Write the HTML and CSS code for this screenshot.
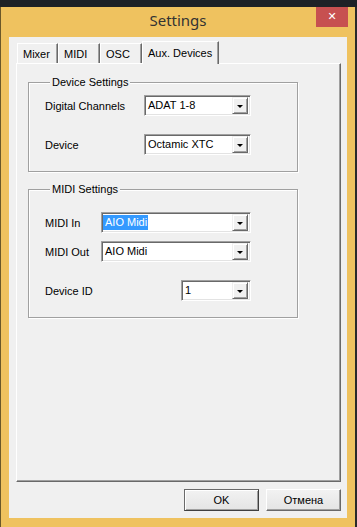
FILE: index.html
```html
<!DOCTYPE html>
<html>
<head>
    <title>Settings</title>
    <link rel="stylesheet" href="styles.css">
</head>
<body>
    <div class="strip"></div>
    <div class="window">
        <div class="titlebar">
            <div class="title">Settings</div>
            <div class="close">&#x2715;</div>
        </div>
        <div class="client">
            <div class="tabs">
                <div class="tab t-mixer">Mixer</div>
                <div class="tab t-midi">MIDI</div>
                <div class="tab t-osc">OSC</div>
                <div class="tab t-aux active">Aux. Devices</div>
            </div>
            <div class="panel">
                <fieldset class="group device">
                    <legend>Device Settings</legend>
                    <div class="row">
                        <span>Digital Channels</span>
                        <div class="combo w107"><span class="val">ADAT 1-8</span><span class="drop"></span></div>
                    </div>
                    <div class="row">
                        <span>Device</span>
                        <div class="combo w107"><span class="val">Octamic XTC</span><span class="drop"></span></div>
                    </div>
                </fieldset>
                <fieldset class="group midi">
                    <legend>MIDI Settings</legend>
                    <div class="row close-next">
                        <span>MIDI In</span>
                        <div class="combo w150"><span class="val sel">AIO Midi</span><span class="drop"></span></div>
                    </div>
                    <div class="row">
                        <span>MIDI Out</span>
                        <div class="combo w150"><span class="val">AIO Midi</span><span class="drop"></span></div>
                    </div>
                    <div class="row">
                        <span>Device ID</span>
                        <div class="combo w70"><span class="val">1</span><span class="drop"></span></div>
                    </div>
                </fieldset>
            </div>
            <div class="buttons">
                <button class="btn default">OK</button>
                <button class="btn">Отмена</button>
            </div>
        </div>
    </div>
</body>
</html>
```

FILE: styles.css
```css
body{
    margin: 0;
    background: #23272d;
    font-family: "Liberation Sans", Arial, sans-serif;
    font-size: 11px;
    color: #000;
}
.strip{
    height: 7px;
    background: #1d2126;
}
.window{
    height: 520px;
    box-sizing: border-box;
    background: #efc25f;
    border-left: 1px solid #6b5829;
    border-right: 2px solid #2a2a2a;
    padding: 0 8px 9px 8px;
}
.titlebar{
    height: 30px;
    display: grid;
    grid-template-columns: 1fr auto 1fr;
    align-items: start;
}
.title{
    grid-column: 2;
    font-family: "Noto Sans", sans-serif;
    font-size: 15px;
    line-height: 27px;
    color: #333;
}
.close{
    grid-column: 3;
    justify-self: end;
    width: 32px;
    height: 20px;
    margin-right: -1px;
    background: #c75050;
    color: #fff;
    font-family: "DejaVu Sans", sans-serif;
    font-size: 11px;
    font-weight: bold;
    text-align: center;
    line-height: 20px;
}
.client{
    height: 481px;
    box-sizing: border-box;
    background: #f0f0f0;
    padding: 4px 6px 0 7px;
}
.tabs{
    display: flex;
    align-items: flex-end;
    height: 22px;
    padding-left: 1px;
}
.tab{
    height: 20px;
    box-sizing: border-box;
    border-top: 1px solid #fff;
    border-left: 1px solid #fff;
    border-right: 1px solid #696969;
    box-shadow: inset -1px 0 #a0a0a0;
    padding: 1px 0 0 5px;
    line-height: 19px;
    background: #f0f0f0;
}
.t-mixer{ width: 41px; }
.t-midi{ width: 42px; }
.t-osc{ width: 42px; }
.t-aux{ width: 77px; }
.tab.active{
    height: 23px;
    margin-bottom: -1px;
    position: relative;
    padding-top: 2px;
}
.panel{
    width: 325px;
    height: 419px;
    box-sizing: border-box;
    border-top: 1px solid #fff;
    border-left: 1px solid #fff;
    border-right: 1px solid #696969;
    border-bottom: 1px solid #696969;
    box-shadow: inset -1px -1px #a0a0a0;
    padding: 12px 0 0 11px;
}
.group{
    width: 270px;
    box-sizing: border-box;
    margin: 0;
    padding: 0 46px 16px 16px;
    border: 1px solid #a0a0a0;
    box-shadow: inset 1px 1px #fff, 1px 1px #fff;
    min-inline-size: 0;
}
.group legend{
    margin-left: 5px;
    padding: 0 2px;
    background: #f0f0f0;
    line-height: 13px;
}
.device{
    padding-top: 6px;
}
.midi{
    margin-top: 11px;
    padding-top: 16px;
}
.row{
    display: flex;
    justify-content: space-between;
    align-items: center;
    margin-bottom: 18px;
}
.row.close-next{
    margin-bottom: 8px;
}
.row:last-child{
    margin-bottom: 0;
}
.combo{
    height: 21px;
    box-sizing: border-box;
    display: flex;
    align-items: center;
    background: #fff;
    border: 1px solid;
    border-color: #a0a0a0 #fff #fff #a0a0a0;
    box-shadow: inset 1px 1px #696969, inset -1px -1px #e3e3e3;
    padding: 1px 2px 1px 1px;
}
.w107{ width: 107px; }
.w150{ width: 150px; }
.w70{ width: 70px; }
.val{
    flex: 1;
    padding-left: 2px;
    line-height: 15px;
}
.val.sel{
    flex: none;
    background: #3399ff;
    color: #fff;
    padding: 0 1px 0 2px;
}
.sel + .drop{
    margin-left: auto;
}
.drop{
    width: 16px;
    height: 17px;
    box-sizing: border-box;
    display: flex;
    align-items: center;
    justify-content: center;
    background: #f0f0f0;
    border: 1px solid;
    border-color: #f0f0f0 #696969 #696969 #f0f0f0;
    box-shadow: inset 1px 1px #fff, inset -1px -1px #a0a0a0;
}
.drop::after{
    content: "";
    border-left: 3px solid transparent;
    border-right: 3px solid transparent;
    border-top: 3px solid #000;
    margin-top: 1px;
}
.buttons{
    display: flex;
    justify-content: flex-end;
    gap: 7px;
    margin-top: 7px;
}
.btn{
    width: 75px;
    height: 22px;
    font-family: "Liberation Sans", Arial, sans-serif;
    font-size: 11px;
    color: #000;
    background: linear-gradient(#f2f2f2, #e4e4e4);
    border: 1px solid;
    border-color: #fff #696969 #696969 #fff;
    box-shadow: inset -1px -1px #a0a0a0;
    padding: 0;
}
.btn.default{
    border-color: #6a6a6a #404040 #404040 #6a6a6a;
    box-shadow: inset 1px 1px #fff, inset -1px -1px #a0a0a0;
}
```
